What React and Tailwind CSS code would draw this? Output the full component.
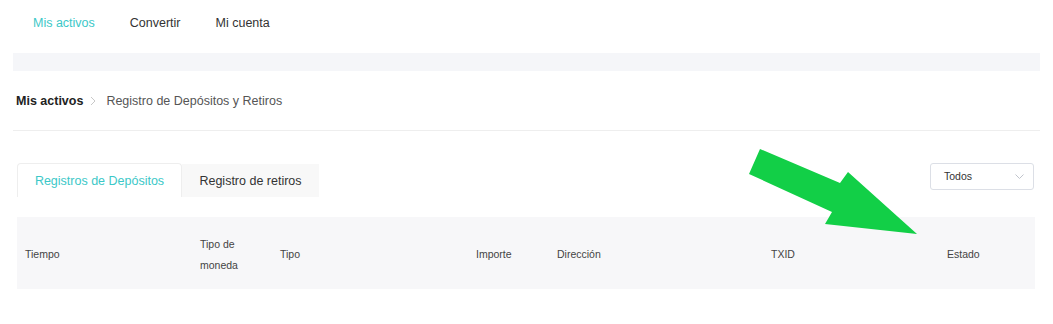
import React from "react";

const columns = [
  { label: "Tiempo", width: "w-[175px]" },
  { label: "Tipo de moneda", width: "w-[80px]" },
  { label: "Tipo", width: "w-[196px]" },
  { label: "Importe", width: "w-[81px]" },
  { label: "Dirección", width: "w-[214px]" },
  { label: "TXID", width: "w-[176px]" },
  { label: "Estado", width: "w-[96px]" },
];

function App() {
  return (
    <div className="relative w-[1053px] h-[324px] overflow-hidden bg-white font-['Liberation_Sans',Arial,sans-serif] text-[#333]">
      {/* Top nav */}
      <nav className="flex h-[45px] items-center gap-[35px] pl-[33px] pt-[1px] text-[12.5px]">
        <span className="text-[#3cc8c8]">Mis activos</span>
        <span>Convertir</span>
        <span>Mi cuenta</span>
      </nav>

      {/* Gray band */}
      <div className="mx-[13px] mt-[8px] h-[18px] bg-[#f5f6f9]" />

      {/* Breadcrumb */}
      <div className="mx-[13px] flex h-[60px] items-center border-b border-[#eeeeee] pl-[3px] pt-[1px] text-[12.5px]">
        <span className="font-bold text-[#222]">Mis activos</span>
        <svg width="6" height="10" viewBox="0 0 6 10" className="ml-[7px] mr-[10px]">
          <path d="M1 1l4 4-4 4" fill="none" stroke="#c8c8c8" strokeWidth="1" />
        </svg>
        <span className="text-[#555]">Registro de Depósitos y Retiros</span>
      </div>

      {/* Tabs + select */}
      <div className="ml-[17px] mr-[19px] mt-[32px] flex items-start justify-between">
        <div className="flex items-end">
          <div className="flex h-[34px] w-[165px] items-center justify-center rounded-t-[4px] border border-b-0 border-[#eeeeee] bg-white pt-[1px] text-[12.5px] text-[#3cc8c8]">
            Registros de Depósitos
          </div>
          <div className="flex h-[33px] w-[137px] items-center justify-center bg-[#f8f8f8] pt-[1px] text-[12.5px] text-[#333]">
            Registro de retiros
          </div>
        </div>
        <div className="flex h-[27px] w-[104px] items-center justify-between rounded-[3px] border border-[#dcdfe6] pl-[13px] pr-[9px] text-[10.5px] text-[#333]">
          <span className="pt-[1px]">Todos</span>
          <svg width="9" height="5" viewBox="0 0 9 5">
            <path d="M0.5 0.5l4 4 4-4" fill="none" stroke="#c0c4cc" strokeWidth="1" />
          </svg>
        </div>
      </div>

      {/* Table header */}
      <div className="ml-[17px] mt-[20px] flex h-[72px] w-[1018px] items-center bg-[#f7f7f9] text-[10.5px] leading-[21px] text-[#444]">
        {columns.map((c) => (
          <div key={c.label} className={`${c.width} px-[8px] pt-[3px]`}>
            {c.label}
          </div>
        ))}
      </div>

      {/* Green annotation arrow */}
      <svg
        className="pointer-events-none absolute left-0 top-0"
        width="1053"
        height="324"
        viewBox="0 0 1053 324"
      >
        <polygon
          points="760,149 840,183 848,172 917,234 825,224 832,212 749,174"
          fill="#12cf47"
        />
      </svg>
    </div>
  );
}

export default App;
